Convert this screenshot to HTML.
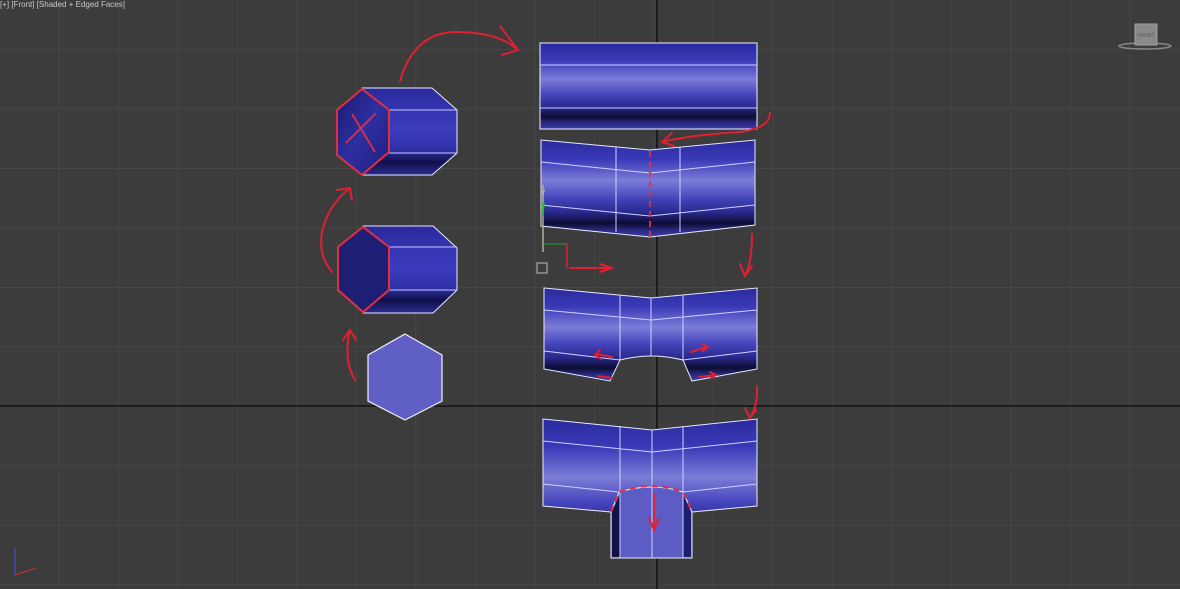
<!DOCTYPE html>
<html><head><meta charset="utf-8"><style>
html,body{margin:0;padding:0;background:#3c3c3c;width:1180px;height:589px;overflow:hidden}
svg{display:block}
</style></head><body>
<svg width="1180" height="589" viewBox="0 0 1180 589" xmlns="http://www.w3.org/2000/svg">
<defs>
<pattern id="grid" x="-1" y="49" width="59.5" height="59.5" patternUnits="userSpaceOnUse">
<path d="M0 0H59.5M0 0V59.5" stroke="#4a4a4a" stroke-width="1.2" fill="none"/>
</pattern>
<linearGradient id="cyl" x1="0" y1="0" x2="0" y2="1">
<stop offset="0" stop-color="#2a2a9c"/>
<stop offset="0.2" stop-color="#3a3ab8"/>
<stop offset="0.42" stop-color="#7c7cd8"/>
<stop offset="0.6" stop-color="#4545bc"/>
<stop offset="0.74" stop-color="#2a2a90"/>
<stop offset="0.86" stop-color="#0c0c34"/>
<stop offset="0.93" stop-color="#2a2a80"/>
<stop offset="1" stop-color="#3a3aa8"/>
</linearGradient>
<linearGradient id="prism" x1="0" y1="0" x2="0" y2="1">
<stop offset="0" stop-color="#2a2a9a"/>
<stop offset="0.3" stop-color="#3636b4"/>
<stop offset="0.5" stop-color="#3c3cbc"/>
<stop offset="0.72" stop-color="#2e2ea4"/>
<stop offset="0.85" stop-color="#10104a"/>
<stop offset="1" stop-color="#2c2c90"/>
</linearGradient>
<linearGradient id="face" x1="0" y1="0" x2="1" y2="1">
<stop offset="0" stop-color="#1a1a70"/>
<stop offset="0.5" stop-color="#2e2ea0"/>
<stop offset="1" stop-color="#1e1e80"/>
</linearGradient>
</defs>
<rect width="1180" height="589" fill="#3c3c3c"/>
<rect width="1180" height="589" fill="url(#grid)"/>
<line x1="657" y1="0" x2="657" y2="589" stroke="#111" stroke-width="1.5"/>
<line x1="0" y1="406" x2="1180" y2="406" stroke="#111" stroke-width="1.5"/>

<text x="0" y="7" font-family="Liberation Sans, sans-serif" font-size="8" fill="#c8c8c8">[+] [Front] [Shaded + Edged Faces]</text>

<ellipse cx="1145" cy="46" rx="26" ry="3" fill="none" stroke="#888" stroke-width="1.5"/>
<rect x="1135" y="24" width="22" height="21" fill="#8a8a8a" stroke="#a0a0a0"/>
<text x="1146" y="37" font-family="Liberation Sans, sans-serif" font-size="5" fill="#555" text-anchor="middle">FRONT</text>

<path d="M362 88H432L457 110V153L432 175H362Z" fill="url(#prism)" stroke="#e8e8ff" stroke-width="1"/>
<path d="M389 110H457M389 153H457" stroke="#c8c8ff" stroke-width="1"/>
<path d="M362 89L389 110V152L362 175L337 155V110Z" fill="url(#face)" stroke="#e03040" stroke-width="2"/>
<path d="M346 143L376 113M352 114L375 152" stroke="#e03040" stroke-width="1.8" fill="none"/>

<path d="M363 226H433L457 248V290L433 313H363Z" fill="url(#prism)" stroke="#e8e8ff" stroke-width="1"/>
<path d="M389 247H457M389 290H457" stroke="#c8c8ff" stroke-width="1"/>
<path d="M363 227L389 247V290L363 312L338 290V247Z" fill="#1e1e74" stroke="#e03040" stroke-width="2"/>

<path d="M405 334L442 355V401L405 420L368 401V355Z" fill="#5f5fc4" stroke="#f0f0ff" stroke-width="1.2"/>

<rect x="540" y="43" width="217" height="86" fill="url(#cyl)" stroke="#f0f0ff" stroke-width="1"/>
<path d="M540 65H757M540 108H757" stroke="#d0d0ff" stroke-width="1"/>

<path d="M541 140L650 150L755 140V225L650 237L541 226Z" fill="url(#cyl)" stroke="#e8e8ff" stroke-width="1"/>
<path d="M541 162L650 173L755 162M541 205L650 216L755 205M616 147V232M680 147V232" stroke="#d0d0ff" stroke-width="1" fill="none"/>
<path d="M650 151V237" stroke="#e03040" stroke-width="1.8" stroke-dasharray="6 4"/>

<path d="M544 288L651 298L757 288V369L692 381L683 360Q651 352 620 360L610 381L544 369Z" fill="url(#cyl)" stroke="#e8e8ff" stroke-width="1"/>
<path d="M544 310L651 320L757 310M544 351L620 360M683 360L757 351M620 295V360M651 298V356M683 295V360" stroke="#d0d0ff" stroke-width="1" fill="none"/>

<path d="M543 419L652 430L757 419V506L692 512V558H611V512L543 506Z" fill="url(#cyl)" stroke="#e8e8ff" stroke-width="1"/>
<path d="M611 512V558H692V512L683 492Q652 482 619 492Z" fill="#5c5cc4" stroke="#e8e8ff" stroke-width="1"/>
<path d="M612 512V557H620V494Z" fill="#12124a"/>
<path d="M691 512V557H683V494Z" fill="#1e1e70"/>
<path d="M543 441L652 452L757 441M543 484L619 492M683 492L757 484M620 426V558M652 430V558M683 426V558" stroke="#d0d0ff" stroke-width="1" fill="none"/>
<path d="M611 512L619 492Q652 480 683 492L692 512" stroke="#e03040" stroke-width="2" fill="none" stroke-dasharray="6 5"/>

<g stroke="#e02030" stroke-width="2" fill="none" stroke-linecap="round">
<path d="M400 81Q415 30 460 32Q500 33 518 50M500 26L518 50L502 55"/>
<path d="M770 113Q770 128 740 132Q690 135 662 142M672 133L662 142L674 146"/>
<path d="M752 234Q752 262 745 276M740 264L745 276L752 266"/>
<path d="M757 386Q758 405 750 418M745 408L750 418L756 410"/>
<path d="M332 272Q318 255 322 232Q328 205 350 188M337 190L350 188L352 200"/>
<path d="M355 380Q343 360 350 330M343 340L350 330L356 340"/>
<path d="M654 494V527M649 518L654 530L659 518"/>
<path d="M612 357L597 354M600 350L595 355L601 359"/>
<path d="M612 378L598 376"/>
<path d="M691 352L707 347M702 344L708 347L703 351"/>
<path d="M699 377L715 375M710 372L716 375L711 378"/>
<path d="M570 268H608M600 264L612 268L600 272"/>
</g>

<line x1="543" y1="185" x2="543" y2="252" stroke="#b0b090" stroke-width="1.5"/>
<path d="M541 203L545 203L543 218Z" fill="#20c030"/>
<line x1="543" y1="244" x2="567" y2="244" stroke="#20a030" stroke-width="1"/>
<line x1="567" y1="244" x2="567" y2="268" stroke="#e02030" stroke-width="1.5"/>
<rect x="537" y="263" width="10" height="10" fill="none" stroke="#bbb" stroke-width="1"/>
<text x="542" y="193" font-family="Liberation Sans, sans-serif" font-size="6" fill="#ccc">y</text>

<line x1="15" y1="548" x2="15" y2="575" stroke="#4050d0" stroke-width="1.2"/>
<line x1="15" y1="575" x2="36" y2="568" stroke="#d03030" stroke-width="1"/>
</svg>
</body></html>
